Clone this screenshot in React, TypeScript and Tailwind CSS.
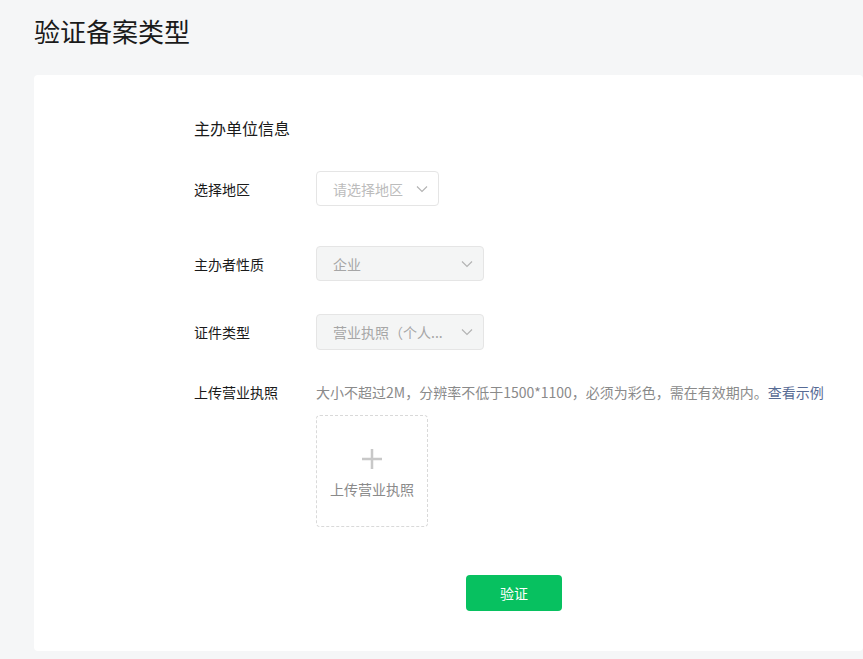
import React from "react";

const font = "[font-family:'Microsoft_YaHei','Noto_Sans_CJK_SC',sans-serif]";

const Chevron = () => (
  <svg width="12" height="8" viewBox="0 0 12 8" fill="none" className="shrink-0">
    <path d="M1 1.5L6 6.5L11 1.5" stroke="#b2b2b2" strokeWidth="1.1" />
  </svg>
);

const Row = ({ label, children }: { label: string; children: React.ReactNode }) => (
  <div className="flex items-center">
    <div className="w-[122px] text-sm text-[#1a1a1a]">{label}</div>
    {children}
  </div>
);

export default function App() {
  return (
    <div className={`${font} min-h-screen bg-[#f5f6f7] pl-[34px] pt-[12px] pb-[8px]`}>
      <h1 className="text-[26px] leading-[38px] text-[#1a1a1a]">验证备案类型</h1>

      <main className="mt-[25px] bg-white rounded-[4px] pl-[160px] pt-[41px] pb-[40px]">
        <h2 className="text-[16px] leading-[24px] text-[#1a1a1a]">主办单位信息</h2>

        <div className="mt-[31px] flex flex-col">
          <Row label="选择地区">
            <div className="flex items-center justify-between w-[123px] h-[35px] pl-[16px] pr-[10px] border border-[#e5e5e5] rounded-[4px] bg-white">
              <span className="text-sm text-[#bcbcbc]">请选择地区</span>
              <Chevron />
            </div>
          </Row>

          <div className="mt-[40px]">
            <Row label="主办者性质">
              <div className="flex items-center justify-between w-[168px] h-[35px] pl-[16px] pr-[10px] border border-[#e5e5e5] rounded-[4px] bg-[#f4f5f5]">
                <span className="text-sm text-[#a6a6a6]">企业</span>
                <Chevron />
              </div>
            </Row>
          </div>

          <div className="mt-[33px]">
            <Row label="证件类型">
              <div className="flex items-center justify-between w-[168px] h-[36px] pl-[16px] pr-[10px] border border-[#e5e5e5] rounded-[4px] bg-[#f4f5f5]">
                <span className="text-sm text-[#a6a6a6] whitespace-nowrap">营业执照（个人...</span>
                <Chevron />
              </div>
            </Row>
          </div>

          <div className="mt-[32px] flex items-start">
            <div className="w-[122px] text-sm leading-[20px] text-[#1a1a1a]">上传营业执照</div>
            <div className="flex flex-col">
              <p className="text-sm leading-[20px] text-[#8a8a8a]">
                大小不超过2M，分辨率不低于1500*1100，必须为彩色，需在有效期内。
                <span className="text-[#576b95]">查看示例</span>
              </p>
              <div className="mt-[13px] w-[112px] h-[112px] border border-dashed border-[#d9d9d9] rounded-[4px] flex flex-col items-center justify-center">
                <svg width="22" height="22" viewBox="0 0 22 22" className="mt-[4px]">
                  <path d="M11 1V21M1 11H21" stroke="#c8c8c8" strokeWidth="2.5" />
                </svg>
                <span className="mt-[9px] text-sm text-[#8a8a8a]">上传营业执照</span>
              </div>
            </div>
          </div>

          <button className="mt-[48px] ml-[272px] w-[96px] h-[36px] rounded-[4px] bg-[#07c160] text-white text-sm">
            验证
          </button>
        </div>
      </main>
    </div>
  );
}
